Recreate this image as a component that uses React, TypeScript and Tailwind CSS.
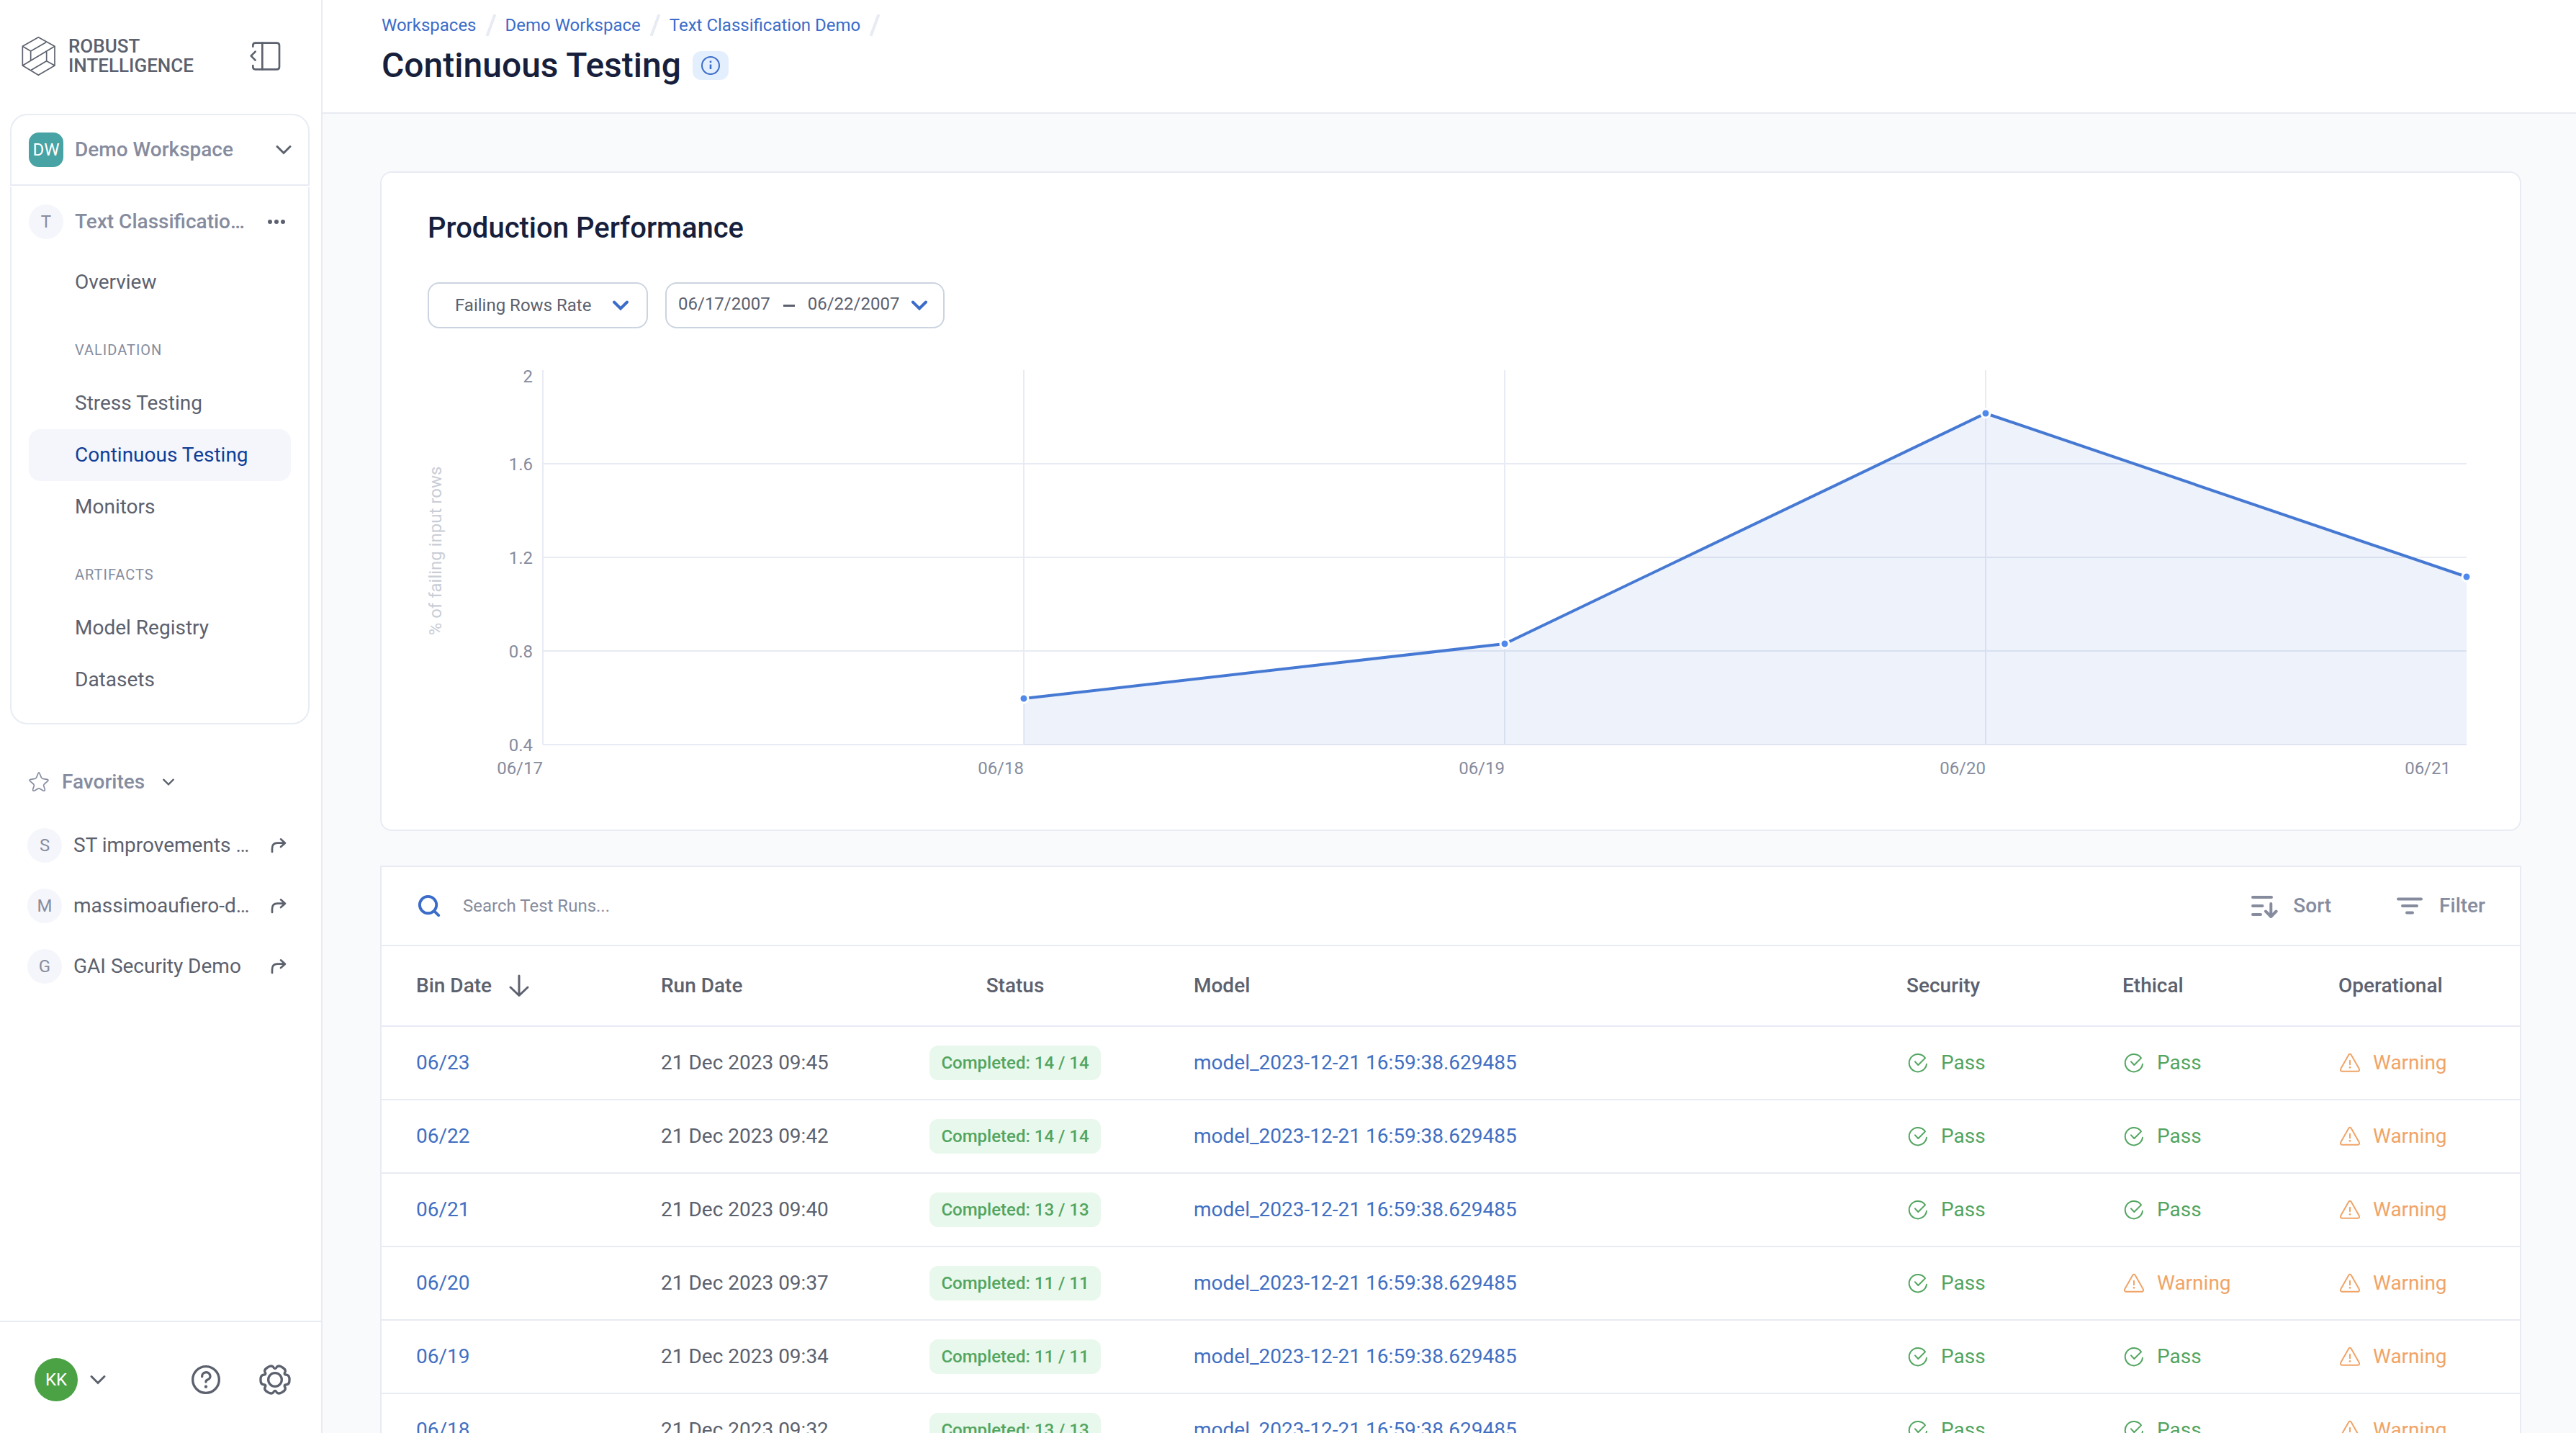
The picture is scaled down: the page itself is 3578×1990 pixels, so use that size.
import React from "react";

type Result = "Pass" | "Warning";

const runs: { bin: string; run: string; status: string; security: Result; ethical: Result; operational: Result }[] = [
  { bin: "06/23", run: "21 Dec 2023 09:45", status: "14 / 14", security: "Pass", ethical: "Pass", operational: "Warning" },
  { bin: "06/22", run: "21 Dec 2023 09:42", status: "14 / 14", security: "Pass", ethical: "Pass", operational: "Warning" },
  { bin: "06/21", run: "21 Dec 2023 09:40", status: "13 / 13", security: "Pass", ethical: "Pass", operational: "Warning" },
  { bin: "06/20", run: "21 Dec 2023 09:37", status: "11 / 11", security: "Pass", ethical: "Warning", operational: "Warning" },
  { bin: "06/19", run: "21 Dec 2023 09:34", status: "11 / 11", security: "Pass", ethical: "Pass", operational: "Warning" },
  { bin: "06/18", run: "21 Dec 2023 09:32", status: "13 / 13", security: "Pass", ethical: "Pass", operational: "Warning" },
];

const MODEL = "model_2023-12-21 16:59:38.629485";

function Logo() {
  return (
    <svg viewBox="88 150 141 168" className="h-14 w-[47px]" fill="none" stroke="currentColor" strokeWidth="5" strokeLinejoin="round" aria-hidden="true">
      <path d="M158 155 226 193V273L158 313 92 273V193Z" />
      <path d="M92 193 126 213 190 176M126 213V254M92 273 226 193M192 213V254L226 273M192 254 128 292" />
    </svg>
  );
}

function CollapseIcon() {
  return (
    <svg viewBox="1040 169 132 132" className="size-11" fill="none" stroke="currentColor" strokeWidth="8" strokeLinecap="round" strokeLinejoin="round" aria-hidden="true">
      <path d="M1056 195V190Q1056 180 1066 180H1155Q1166 180 1166 191V279Q1166 290 1155 290H1066Q1056 290 1056 280V274" />
      <path d="M1095 180V290M1066 216 1048 234 1066 252" />
    </svg>
  );
}

function Chevron({ className, width = 3 }: { className: string; width?: number }) {
  return (
    <svg viewBox="0 0 24 16" className={className} fill="none" stroke="currentColor" strokeWidth={width} strokeLinecap="round" aria-hidden="true">
      <path d="M3 3.5 12 12.5 21 3.5" />
    </svg>
  );
}

function StarIcon() {
  return (
    <svg viewBox="117 96 90 90" className="size-[30px]" fill="none" stroke="currentColor" strokeWidth="5" strokeLinejoin="round" aria-hidden="true">
      <path d="M159 105Q162 98 165 105L172 122Q174 126 178 127L196 130Q204 132 199 137L184 150Q181 153 182 157L187 171Q188 180 180 177L166 169Q162 166 158 169L144 177Q136 180 137 171L142 157Q143 153 140 150L125 137Q120 132 128 130L146 127Q150 126 152 122Z" />
    </svg>
  );
}

function GoIcon() {
  return (
    <svg viewBox="1127 372 66 66" className="size-[22px]" fill="none" stroke="currentColor" strokeWidth="8" strokeLinecap="round" strokeLinejoin="round" aria-hidden="true">
      <path d="M1133 432V418Q1133 395 1155 395H1186M1169 379 1187 395 1169 411" />
    </svg>
  );
}

function HelpIcon() {
  return (
    <svg viewBox="798 228 120 120" className="size-10" fill="none" stroke="currentColor" strokeWidth="10" strokeLinecap="round" aria-hidden="true">
      <circle cx="858" cy="288" r="55" />
      <path d="M842 275A17 16 0 1 1 865 288Q858 291 858 297" />
      <circle cx="858" cy="317" r="6.5" fill="currentColor" stroke="none" />
    </svg>
  );
}

function gearPath() {
  const at = (r: number, deg: number) => {
    const a = (deg * Math.PI) / 180;
    return `${(r * Math.cos(a)).toFixed(1)} ${(r * Math.sin(a)).toFixed(1)}`;
  };
  let d = `M${at(54, -22)}`;
  for (let a = 0; a < 360; a += 60) {
    d += `Q${at(63, a - 16)} ${at(60, a)}Q${at(63, a + 16)} ${at(54, a + 22)}Q${at(39, a + 30)} ${at(54, a + 38)}`;
  }
  return d + "Z";
}

function GearIcon() {
  return (
    <svg viewBox="-66 -66 132 132" className="size-11" fill="none" stroke="currentColor" strokeWidth="10" strokeLinejoin="round" aria-hidden="true">
      <path d={gearPath()} />
      <circle r="28" />
    </svg>
  );
}

function InfoIcon() {
  return (
    <svg viewBox="0 0 26 26" className="size-[26px]" fill="none" stroke="currentColor" strokeWidth="2" aria-hidden="true">
      <circle cx="13" cy="13" r="12" />
      <path d="M13 11.5V18M13 6.5V9" strokeWidth="2.6" />
    </svg>
  );
}

function SearchIcon() {
  return (
    <svg viewBox="0 0 36 36" className="size-9 text-[#3b6cc9]" fill="none" stroke="currentColor" strokeWidth="4" strokeLinecap="round" aria-hidden="true">
      <circle cx="17" cy="16.5" r="12" />
      <path d="M26 25.5 32 31.5" />
    </svg>
  );
}

function SortIcon() {
  return (
    <svg viewBox="0 0 40 40" className="size-10" fill="none" stroke="currentColor" strokeWidth="4" strokeLinecap="round" strokeLinejoin="round" aria-hidden="true">
      <path d="M4 8H30M4 20H17.5M4 32H15M29.3 17V35M22 27.5 29.3 35 36.6 27.5" />
    </svg>
  );
}

function FilterIcon() {
  return (
    <svg viewBox="0 0 40 40" className="size-10" fill="none" stroke="currentColor" strokeWidth="4" strokeLinecap="round" aria-hidden="true">
      <path d="M5 10.5H37M11 20H31M17 29.5H25" />
    </svg>
  );
}

function PassIcon() {
  return (
    <svg viewBox="54 90 96 96" className="size-8" fill="none" stroke="currentColor" strokeWidth="6" strokeLinecap="round" strokeLinejoin="round" aria-hidden="true">
      <path d="M138 143A36.5 36.5 0 1 1 132 118L103 147 90 133" />
    </svg>
  );
}

function WarningIcon() {
  return (
    <svg viewBox="444 990 96 96" className="size-8" fill="none" stroke="currentColor" strokeWidth="6" strokeLinecap="round" strokeLinejoin="round" aria-hidden="true">
      <path d="M487 1004Q492 998 497 1004L530 1062Q534 1072 525 1073H459Q450 1072 454 1062Z" />
      <path d="M492 1028V1045" />
      <circle cx="492" cy="1057" r="4" fill="currentColor" stroke="none" />
    </svg>
  );
}

function Slash() {
  return (
    <svg viewBox="0 0 16 30" className="h-[30px] w-4 text-[#e8ebf3]" stroke="currentColor" strokeWidth="4" aria-hidden="true">
      <path d="M2.5 30 13.5 0" />
    </svg>
  );
}

function Avatar({ letter }: { letter: string }) {
  return (
    <span className="flex size-12 shrink-0 items-center justify-center rounded-full bg-[#f5f6fb] text-2xl text-[#868c9e]">{letter}</span>
  );
}

function NavItem({ label, active }: { label: string; active?: boolean }) {
  return (
    <a
      href="#"
      aria-current={active ? "page" : undefined}
      className={
        active
          ? "flex h-[72px] items-center rounded-2xl bg-[#f5f6fb] pl-16 text-[28px] text-[#113f98]"
          : "flex h-[72px] items-center rounded-2xl pl-16 text-[28px] text-[#5c616e]"
      }
    >
      {label}
    </a>
  );
}

function NavGroup({ title }: { title: string }) {
  return <h3 className="mt-11 mb-6 pl-16 text-xl leading-7 tracking-wider text-[#868c9e]">{title}</h3>;
}

function Sidebar() {
  return (
    <aside className="flex w-[448px] shrink-0 flex-col border-r-2 border-[#e8ebf3] bg-white text-[#5c616e]">
      <div className="flex h-[158px] items-start justify-between pt-[50px] pr-14 pl-[30px]">
        <a href="#" className="flex items-center gap-[18px]">
          <Logo />
          <span className="text-[26px] leading-[27px] font-medium">
            ROBUST
            <br />
            INTELLIGENCE
          </span>
        </a>
        <button type="button" aria-label="Collapse sidebar" className="mt-[6px]">
          <CollapseIcon />
        </button>
      </div>

      <div className="mr-4 ml-[14px]">
        <button type="button" className="flex h-[100px] w-full items-center rounded-t-3xl border-2 border-[#e8ecf3] px-6 text-left">
          <span className="flex size-12 items-center justify-center rounded-[14px] bg-[#48a3a4] text-2xl text-white">DW</span>
          <span className="ml-4 flex-1 text-[28px] font-medium text-[#868c9e]">Demo Workspace</span>
          <Chevron className="-mr-[2px] h-4 w-6" />
        </button>
        <nav className="mt-[2px] rounded-b-3xl border-2 border-t-0 border-[#e8ecf3] px-6 py-6">
          <div className="mb-6 flex items-center">
            <Avatar letter="T" />
            <span className="ml-4 flex-1 text-[28px] font-medium whitespace-nowrap text-[#868c9e]">Text Classificatio…</span>
            <button type="button" aria-label="Project options" className="mr-2">
              <svg viewBox="0 0 24 8" className="h-2 w-6" fill="currentColor" aria-hidden="true">
                <circle cx="3" cy="4" r="3" />
                <circle cx="12" cy="4" r="3" />
                <circle cx="21" cy="4" r="3" />
              </svg>
            </button>
          </div>
          <NavItem label="Overview" />
          <NavGroup title="VALIDATION" />
          <NavItem label="Stress Testing" />
          <NavItem label="Continuous Testing" active />
          <NavItem label="Monitors" />
          <NavGroup title="ARTIFACTS" />
          <NavItem label="Model Registry" />
          <NavItem label="Datasets" />
        </nav>
      </div>

      <div className="mt-[60px] pl-[38px]">
        <button type="button" className="flex h-10 items-center pl-px text-[28px] font-medium text-[#868c9e]">
          <StarIcon />
          <span className="ml-[17px]">Favorites</span>
          <Chevron className="ml-6 h-3 w-[18px] text-[#5c616e]" />
        </button>
        <ul className="mt-11 flex flex-col gap-9">
          {[
            ["S", "ST improvements …"],
            ["M", "massimoaufiero-d…"],
            ["G", "GAI Security Demo"],
          ].map(([letter, name]) => (
            <li key={name}>
              <a href="#" className="flex items-center pr-12">
                <Avatar letter={letter} />
                <span className="ml-4 flex-1 text-[28px] whitespace-nowrap">{name}</span>
                <GoIcon />
              </a>
            </li>
          ))}
        </ul>
      </div>

      <div className="mt-auto flex h-[156px] items-center border-t-2 border-[#e8ebf3] pt-[6px] pr-[42px] pl-12">
        <button type="button" className="flex items-center gap-4">
          <span className="flex size-[60px] items-center justify-center rounded-full bg-[#4ba245] text-2xl text-white">KK</span>
          <Chevron className="h-4 w-6" />
        </button>
        <button type="button" aria-label="Help" className="ml-auto">
          <HelpIcon />
        </button>
        <button type="button" aria-label="Settings" className="ml-[54px]">
          <GearIcon />
        </button>
      </div>
    </aside>
  );
}

const points = [
  { x: 25, y: 456 },
  { x: 50, y: 380 },
  { x: 75, y: 60 },
  { x: 100, y: 287 },
];

function Chart() {
  const line = points.map((p) => `${p.x},${p.y}`).join(" ");
  return (
    <div className="mt-[58px] mr-[10px] mb-[118px] ml-40">
      <svg className="block h-[520px] w-full overflow-visible text-2xl" role="img" aria-label="Failing rows rate by date">
        <g stroke="#e8ebf3" strokeWidth="2">
          {[130, 260, 390, 520].map((y) => (
            <line key={y} x1="0" x2="100%" y1={y} y2={y} />
          ))}
          {["0%", "25%", "50%", "75%"].map((x) => (
            <line key={x} x1={x} x2={x} y1="0" y2="520" />
          ))}
        </g>
        <svg viewBox="0 0 100 520" preserveAspectRatio="none" width="100%" height="520" className="overflow-visible">
          <polygon points={`25,520 ${line} 100,520`} fill="#4a7bd4" fillOpacity="0.1" />
          <polyline points={line} fill="none" stroke="#4679d3" strokeWidth="4" vectorEffect="non-scaling-stroke" />
        </svg>
        {points.map((p) => (
          <circle key={p.x} cx={`${p.x}%`} cy={p.y} r="6" fill="#5089ec" stroke="#fff" strokeWidth="3" />
        ))}
        <g fill="#868c9e" textAnchor="end">
          <text x="-14" y="17">2</text>
          <text x="-14" y="139">1.6</text>
          <text x="-14" y="269">1.2</text>
          <text x="-14" y="399">0.8</text>
          <text x="-14" y="529">0.4</text>
          <text x="0" y="561">06/17</text>
          <text x="25%" y="561">06/18</text>
          <text x="50%" y="561">06/19</text>
          <text x="75%" y="561">06/20</text>
          <text x="100%" dx="-22" y="561">06/21</text>
        </g>
        <text fill="#c9cdd6" textAnchor="middle" transform="translate(-141 251) rotate(-90)">
          % of failing input rows
        </text>
      </svg>
    </div>
  );
}

function ResultCell({ value }: { value: Result }) {
  return value === "Pass" ? (
    <span className="flex items-center gap-4 text-[#52a560]">
      <PassIcon />
      Pass
    </span>
  ) : (
    <span className="flex items-center gap-4 text-[#f0a468]">
      <WarningIcon />
      Warning
    </span>
  );
}

function RunsTable() {
  return (
    <section className="mt-12 border-2 border-[#e8ebf3] bg-white">
      <div className="flex h-[110px] items-center border-b-2 border-[#e8ebf3] px-12">
        <label className="flex flex-1 items-center gap-[30px]">
          <SearchIcon />
          <input type="search" aria-label="Search test runs" placeholder="Search Test Runs..." className="w-full text-2xl outline-none placeholder:text-[#868c9e]" />
        </label>
        <button type="button" className="flex items-center gap-5 text-[28px] font-medium text-[#868c9e]">
          <SortIcon />
          Sort
        </button>
        <button type="button" className="ml-[88px] flex items-center gap-[22px] text-[28px] font-medium text-[#868c9e]">
          <FilterIcon />
          Filter
        </button>
      </div>
      <table className="w-full table-fixed border-separate border-spacing-0 text-[28px] text-[#5c616e]">
        <colgroup>
          <col className="w-[340px]" />
          <col className="w-[340px]" />
          <col className="w-[400px]" />
          <col />
          <col className="w-[300px]" />
          <col className="w-[300px]" />
          <col className="w-[300px]" />
        </colgroup>
        <thead>
          <tr className="h-[112px] text-left [&>th]:border-b-2 [&>th]:border-[#e8ebf3] [&>th]:py-0 [&>th]:pl-12 [&>th]:font-medium">
            <th scope="col" aria-sort="descending">
              <button type="button" className="flex items-center gap-[22px]">
                Bin Date
                <svg viewBox="0 0 32 32" className="size-8" fill="none" stroke="currentColor" strokeWidth="3" strokeLinecap="round" strokeLinejoin="round" aria-hidden="true">
                  <path d="M16 2V29M4 18 16 29.5 28 18" />
                </svg>
              </button>
            </th>
            <th scope="col">Run Date</th>
            <th scope="col" className="pr-12 text-center">Status</th>
            <th scope="col">Model</th>
            <th scope="col">Security</th>
            <th scope="col">Ethical</th>
            <th scope="col">Operational</th>
          </tr>
        </thead>
        <tbody>
          {runs.map((r) => (
            <tr key={r.bin} className="h-[102px] [&>td]:border-b-2 [&>td]:border-[#e8ebf3] [&>td]:py-0 [&>td]:pl-12">
              <td><a href="#" className="text-[#416fc2]">{r.bin}</a></td>
              <td>{r.run}</td>
              <td className="pr-12 text-center">
                <span className="inline-flex h-12 items-center rounded-xl bg-[#e9f8ec] px-4 align-middle text-2xl font-medium text-[#52a560]">
                  Completed: {r.status}
                </span>
              </td>
              <td><a href="#" className="text-[#416fc2]">{MODEL}</a></td>
              <td><ResultCell value={r.security} /></td>
              <td><ResultCell value={r.ethical} /></td>
              <td><ResultCell value={r.operational} /></td>
            </tr>
          ))}
        </tbody>
      </table>
    </section>
  );
}

export default function App() {
  return (
    <div className="flex h-screen overflow-hidden bg-[#f9fafc] font-['Roboto',sans-serif]">
      <Sidebar />
      <div className="flex min-w-0 flex-1 flex-col">
        <header className="shrink-0 border-b-2 border-[#e8ebf3] bg-white pt-5 pb-[35px] pl-[82px]">
          <nav aria-label="Breadcrumb" className="flex h-[30px] items-center gap-3 text-2xl text-[#3b6cc9]">
            <a href="#">Workspaces</a>
            <Slash />
            <a href="#">Demo Workspace</a>
            <Slash />
            <a href="#">Text Classification Demo</a>
            <Slash />
          </nav>
          <div className="mt-[11px] flex h-[60px] items-center gap-4 text-[#171f3c]">
            <h1 className="text-5xl font-medium">Continuous Testing</h1>
            <button type="button" aria-label="About this page" className="flex h-10 w-[50px] items-center justify-center rounded-xl bg-[#e4effd] text-[#3b6cc9]">
              <InfoIcon />
            </button>
          </div>
        </header>
        <main className="min-h-0 flex-1 overflow-hidden pt-20 pr-[76px] pl-20">
          <section className="rounded-2xl border-2 border-[#e8ebf3] bg-white px-16 pt-[50px]">
            <h2 className="text-[40px] leading-[54px] font-medium text-[#171f3c]">Production Performance</h2>
            <div className="mt-12 flex gap-6 text-2xl text-[#5c616e]">
              <div className="relative">
                <select aria-label="Metric" className="h-16 w-[306px] appearance-none rounded-2xl border-2 border-[#cbd4e0] bg-white pl-9">
                  <option>Failing Rows Rate</option>
                </select>
                <Chevron width={4} className="pointer-events-none absolute top-6 right-[26px] h-4 w-6 text-[#3b6cc9]" />
              </div>
              <button type="button" aria-label="Date range" className="flex h-16 items-center rounded-2xl border-2 border-[#cbd4e0] pr-[21px] pl-4">
                <span className="flex items-center gap-[18px] pb-1">
                  06/17/2007
                  <span className="mt-1 h-[3px] w-4 bg-[#5c616e]" />
                  06/22/2007
                </span>
                <Chevron width={4} className="ml-4 h-4 w-6 text-[#3b6cc9]" />
              </button>
            </div>
            <Chart />
          </section>
          <RunsTable />
        </main>
      </div>
    </div>
  );
}
